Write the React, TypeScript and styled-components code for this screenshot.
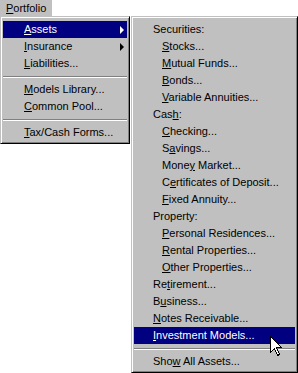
import React from 'react';
import styled, {createGlobalStyle} from 'styled-components';

const GlobalStyle = createGlobalStyle`
  html, body {
    margin: 0;
    padding: 0;
    background: #ffffff;
  }
  body {
    font-family: "Liberation Sans", Arial, sans-serif;
    font-size: 11px;
    color: #000;
  }
`;

const Page = styled.div`
  width: 298px;
  height: 373px;
  overflow: hidden;
  position: relative;
  background: #fff;
`;

const MenuBar = styled.div`
  display: flex;
  height: 16px;
`;

const BarItem = styled.div`
  background: #c0c0c0;
  height: 16px;
  line-height: 16px;
  padding: 0 6px 0 6px;
`;

const MenuRow = styled.div`
  display: flex;
  align-items: flex-start;
  gap: 1px;
`;

// classic raised 3D menu frame
const Menu = styled.div<{$width: number}>`
  width: ${(p) => p.$width}px;
  box-sizing: border-box;
  background: #c0c0c0;
  border: 1px solid;
  border-color: #c0c0c0 #000 #000 #c0c0c0;
  box-shadow: inset 1px 1px 0 #fff, inset -1px -1px 0 #808080;
  padding: 4px 2px 2px 2px;
  position: relative;
`;

const Item = styled.div<{$active?: boolean; $indent?: number}>`
  height: 17px;
  line-height: 17px;
  position: relative;
  padding-left: ${(p) => p.$indent ?? 21}px;
  white-space: nowrap;
  background: ${(p) => (p.$active ? '#000080' : 'transparent')};
  color: ${(p) => (p.$active ? '#fff' : '#000')};
`;

const Separator = styled.div`
  height: 9px;
  display: flex;
  align-items: center;
  &::before {
    content: '';
    flex: 1;
    height: 1px;
    background: #808080;
    border-bottom: 1px solid #fff;
  }
`;

const Key = styled.span`
  text-decoration: underline;
  text-underline-offset: 1px;
`;

const Arrow = styled.span<{$active?: boolean}>`
  position: absolute;
  right: 3px;
  top: 5px;
  width: 0;
  height: 0;
  border-top: 4px solid transparent;
  border-bottom: 4px solid transparent;
  border-left: 4px solid ${(p) => (p.$active ? '#fff' : '#000')};
`;

const Cursor = styled.svg`
  position: absolute;
  left: 270px;
  top: 336px;
`;

const Label: React.FC<{text: string; k: number}> = ({text, k}) => (
  <>
    {text.slice(0, k)}
    <Key>{text[k]}</Key>
    {text.slice(k + 1)}
  </>
);

type Sub = {text: string; k: number; level: 0 | 1; active?: boolean};

const subItems: Sub[] = [
  {text: 'Securities:', k: -1, level: 0},
  {text: 'Stocks...', k: 0, level: 1},
  {text: 'Mutual Funds...', k: 0, level: 1},
  {text: 'Bonds...', k: 0, level: 1},
  {text: 'Variable Annuities...', k: 0, level: 1},
  {text: 'Cash:', k: 3, level: 0},
  {text: 'Checking...', k: 0, level: 1},
  {text: 'Savings...', k: 1, level: 1},
  {text: 'Money Market...', k: 4, level: 1},
  {text: 'Certificates of Deposit...', k: 1, level: 1},
  {text: 'Fixed Annuity...', k: 0, level: 1},
  {text: 'Property:', k: -1, level: 0},
  {text: 'Personal Residences...', k: 0, level: 1},
  {text: 'Rental Properties...', k: 0, level: 1},
  {text: 'Other Properties...', k: 0, level: 1},
  {text: 'Retirement...', k: 2, level: 0},
  {text: 'Business...', k: 1, level: 0},
  {text: 'Notes Receivable...', k: 0, level: 0},
  {text: 'Investment Models...', k: 0, level: 0, active: true},
];

export default function App() {
  return (
    <Page>
      <GlobalStyle />
      <MenuBar>
        <BarItem>
          <Label text="Portfolio" k={0} />
        </BarItem>
      </MenuBar>
      <MenuRow>
        <Menu $width={130}>
          <Item $active>
            <Label text="Assets" k={0} />
            <Arrow $active />
          </Item>
          <Item>
            <Label text="Insurance" k={0} />
            <Arrow />
          </Item>
          <Item>
            <Label text="Liabilities..." k={0} />
          </Item>
          <Separator />
          <Item>
            <Label text="Models Library..." k={0} />
          </Item>
          <Item>
            <Label text="Common Pool..." k={0} />
          </Item>
          <Separator />
          <Item>
            <Label text="Tax/Cash Forms..." k={0} />
          </Item>
        </Menu>
        <Menu $width={167}>
          {subItems.map((s) => (
            <Item key={s.text} $indent={s.level ? 28 : 19} $active={s.active}>
              {s.k < 0 ? s.text : <Label text={s.text} k={s.k} />}
            </Item>
          ))}
          <Separator />
          <Item $indent={19}>
            <Label text="Show All Assets..." k={3} />
          </Item>
        </Menu>
      </MenuRow>
      <Cursor width="13" height="20" viewBox="0 0 13 20">
        <path
          d="M0.5 0.5 L0.5 16.5 L4.5 12.5 L7.5 19.5 L9.5 18.5 L6.5 11.5 L11.5 11.5 Z"
          fill="#fff"
          stroke="#000"
          strokeWidth="1"
          shapeRendering="crispEdges"
        />
      </Cursor>
    </Page>
  );
}
